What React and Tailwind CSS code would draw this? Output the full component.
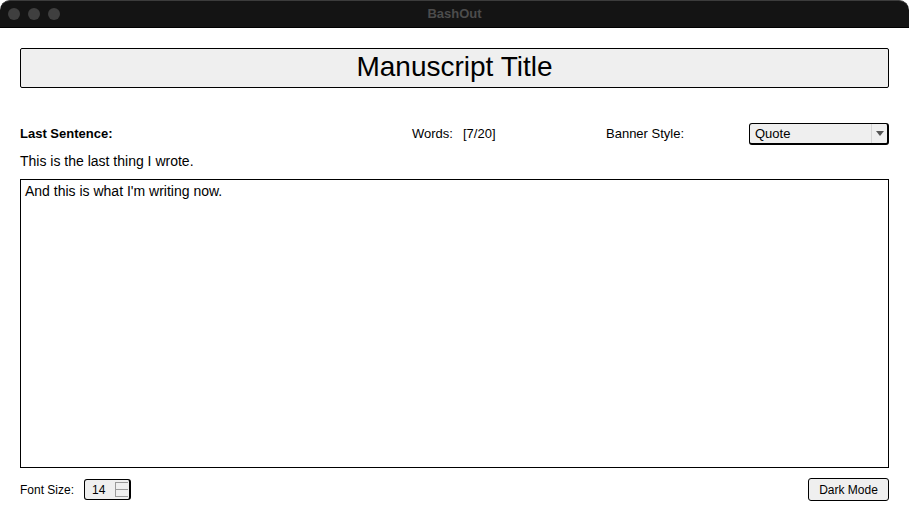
function TitleBar() {
  return (
    <div className="relative flex h-[28px] items-center justify-center rounded-t-[10px] border-t border-[#3c3c3c] border-b border-b-black bg-[#141414]">
      <div className="absolute left-[8px] top-[7px] flex gap-[8px]">
        <span className="h-[12px] w-[12px] rounded-full bg-[#3f3f3f]" />
        <span className="h-[12px] w-[12px] rounded-full bg-[#3f3f3f]" />
        <span className="h-[12px] w-[12px] rounded-full bg-[#3f3f3f]" />
      </div>
      <span className="text-[13px] font-bold text-[#4c4c4c]">BashOut</span>
    </div>
  )
}

function Dropdown({ value }) {
  return (
    <div className="flex h-[22px] w-[140px] items-stretch rounded-[3px] border border-black border-r-2 border-b-2 bg-[#efefef]">
      <span className="flex flex-1 items-center pl-[5px] text-[13px] text-black">{value}</span>
      <span className="flex w-[16px] items-center justify-center border-l border-[#d6d6d6]">
        <svg width="8" height="5" viewBox="0 0 8 5">
          <path d="M0 0 L8 0 L4 5 Z" fill="#555" />
        </svg>
      </span>
    </div>
  )
}

function Spinner({ value }) {
  return (
    <div className="flex h-[21px] w-[47px] items-center rounded-[3px] border border-black border-r-2 bg-[#efefef]">
      <span className="flex-1 pl-[7px] text-[12px] text-black">{value}</span>
      <span className="mr-[1px] flex h-[15px] w-[13px] flex-col justify-between border-l border-[#9a9a9a]">
        <span className="h-px bg-[#9a9a9a]" />
        <span className="h-px bg-[#9a9a9a]" />
        <span className="h-px bg-[#9a9a9a]" />
      </span>
    </div>
  )
}

export default function App() {
  return (
    <div
      className="h-[522px] w-[909px] overflow-hidden bg-white"
      style={{ fontFamily: '"Liberation Sans", Arial, sans-serif' }}
    >
      <div className="flex h-full flex-col rounded-[10px] bg-white">
        <TitleBar />
        <div className="flex flex-1 flex-col px-[20px] pt-[20px]">
          <div className="flex h-[40px] items-center justify-center rounded-[2px] border border-black bg-[#efefef] pb-[2px] text-[28px] text-black">
            Manuscript Title
          </div>

          <div className="mt-[35px] flex h-[22px] items-center text-[13px] text-black">
            <span className="w-[392px] font-bold">Last Sentence:</span>
            <span className="w-[51px]">Words:</span>
            <span className="w-[143px]">[7/20]</span>
            <span className="w-[143px]">Banner Style:</span>
            <Dropdown value="Quote" />
          </div>

          <p className="mt-[8px] text-[14px] leading-[17px] text-black">This is the last thing I wrote.</p>

          <div className="mt-[9px] h-[289px] border border-black px-[4px] pt-[3px] text-[14px] leading-[17px] text-black">
            And this is what I'm writing now.
          </div>

          <div className="mt-[10px] flex items-center justify-between">
            <div className="flex items-center gap-[10px]">
              <span className="text-[12px] text-black">Font Size:</span>
              <Spinner value="14" />
            </div>
            <button className="h-[23px] w-[81px] rounded-[3px] border border-black bg-[#efefef] text-[12px] text-black">
              Dark Mode
            </button>
          </div>
        </div>
      </div>
    </div>
  )
}
